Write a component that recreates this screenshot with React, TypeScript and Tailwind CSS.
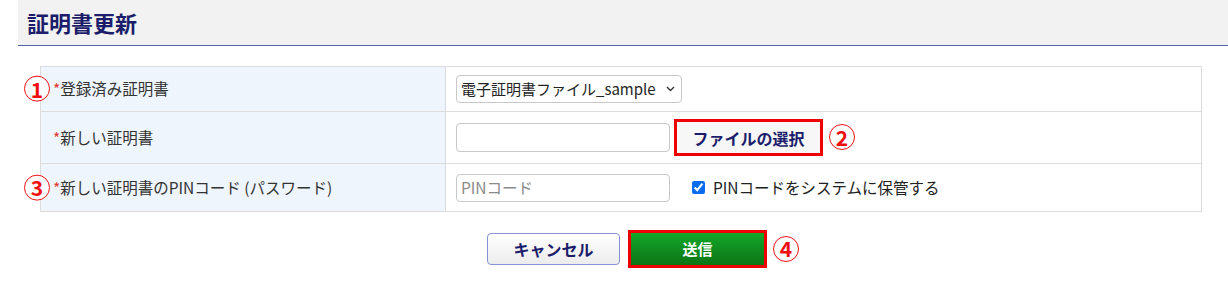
import React from "react";

const font = { fontFamily: '"Noto Sans CJK JP", "Noto Sans", sans-serif' };

function Circled({ n }: { n: string }) {
  return (
    <span className="inline-flex items-center justify-center w-[26px] h-[26px] rounded-full border-[1.5px] border-[#f01010] text-[#f01010] text-[21px] font-bold leading-none bg-white">
      {n}
    </span>
  );
}

function Label({ text, mark }: { text: string; mark?: string }) {
  return (
    <td className="relative w-[405px] bg-[#eef5fc] border border-[#dcdcdc] pl-[12px] text-[15.5px] text-[#333]">
      {mark && (
        <span className="absolute left-[-17px] top-1/2 -translate-y-1/2">
          <Circled n={mark} />
        </span>
      )}
      <span className="text-[#e53935]">*</span>
      {text}
    </td>
  );
}

export default function App() {
  return (
    <div className="w-[1228px] h-[293px] bg-white" style={font}>
      {/* HEADER */}
      <div className="ml-[18px] h-[46px] bg-[#f2f2f2] border-b border-[#5560a8] flex items-center pl-[9px]">
        <h1 className="text-[22px] font-bold text-[#1b1d6b]">証明書更新</h1>
      </div>

      {/* FORM TABLE */}
      <table className="ml-[40px] mt-[20px] w-[1162px] border-collapse">
        <tbody>
          <tr className="h-[45px]">
            <Label text="登録済み証明書" mark="1" />
            <td className="border border-[#dcdcdc] pl-[10px]">
              <div className="w-[226px] h-[28px] border border-[#c8c8c8] rounded-[4px] flex items-center pl-[4px] pr-[6px] justify-between text-[15px] text-[#222]">
                <span>電子証明書ファイル_sample</span>
                <svg width="9" height="6" viewBox="0 0 9 6" fill="none">
                  <path d="M1 1l3.5 3.5L8 1" stroke="#333" strokeWidth="1.4" />
                </svg>
              </div>
            </td>
          </tr>
          <tr className="h-[52px]">
            <Label text="新しい証明書" />
            <td className="border border-[#dcdcdc] pl-[10px]">
              <div className="flex items-center">
                <div className="w-[214px] h-[29px] border border-[#c8c8c8] rounded-[4px]" />
                <div className="ml-[4px] border-[3px] border-[#ee0000] w-[149px] h-[37px] flex items-center justify-center bg-[#f7f7f7]">
                  <span className="text-[16px] font-bold text-[#1b1d6b]">ファイルの選択</span>
                </div>
                <span className="ml-[6px]">
                  <Circled n="2" />
                </span>
              </div>
            </td>
          </tr>
          <tr className="h-[48px]">
            <Label text="新しい証明書のPINコード (パスワード)" mark="3" />
            <td className="border border-[#dcdcdc] pl-[10px]">
              <div className="flex items-center">
                <div className="w-[214px] h-[28px] border border-[#c8c8c8] rounded-[4px] flex items-center pl-[4px] text-[15.5px] text-[#8a8a8a]">
                  PINコード
                </div>
                <input
                  type="checkbox"
                  defaultChecked
                  className="ml-[22px] w-[13px] h-[13px] accent-[#0b6cf0]"
                />
                <span className="ml-[8px] text-[15.5px] text-[#222]">PINコードをシステムに保管する</span>
              </div>
            </td>
          </tr>
        </tbody>
      </table>

      {/* BUTTONS */}
      <div className="flex items-center pl-[487px] mt-[18px]">
        <button className="w-[133px] h-[32px] rounded-[4px] border border-[#8592d4] bg-gradient-to-b from-white to-[#ececec] text-[16px] font-bold text-[#1b1d6b]">
          キャンセル
        </button>
        <div className="ml-[8px] border-[3px] border-[#ee0000] w-[139px] h-[38px]">
          <button className="w-full h-full bg-gradient-to-b from-[#12a82a] to-[#0d7415] text-[15px] font-bold text-white">
            送信
          </button>
        </div>
        <span className="ml-[6px]">
          <Circled n="4" />
        </span>
      </div>
    </div>
  );
}
